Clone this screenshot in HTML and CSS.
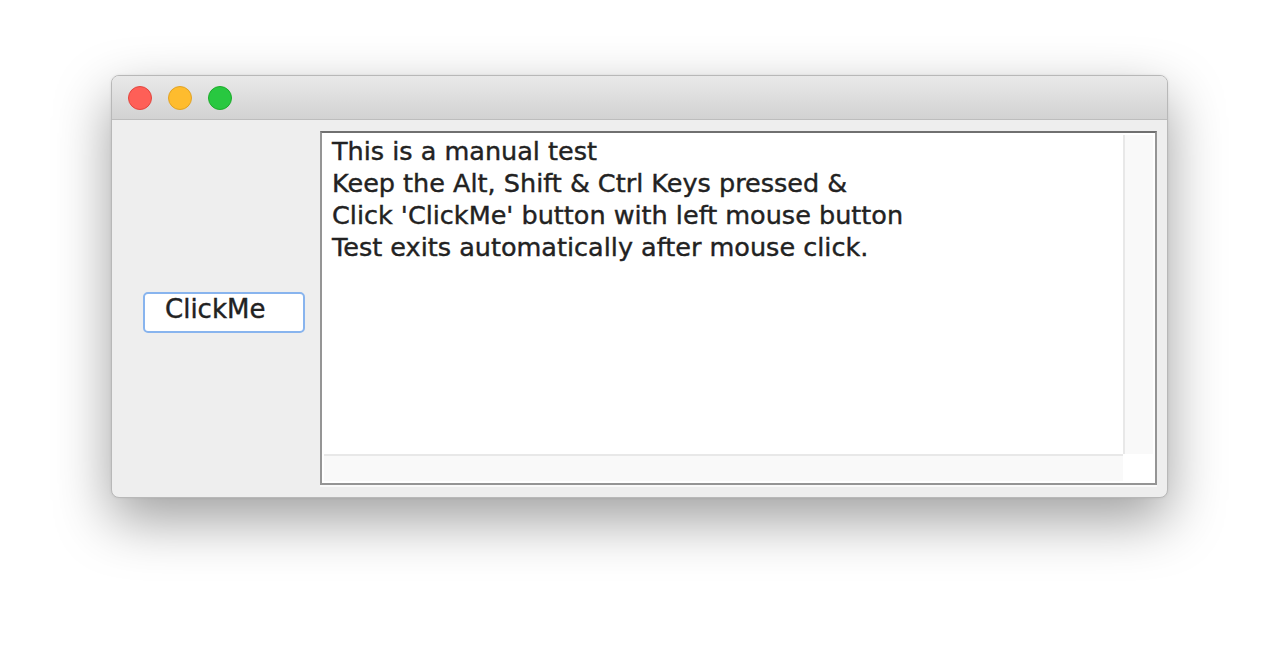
FILE: index.html
```html
<!DOCTYPE html>
<html>
<head>
<meta charset="utf-8">
<link rel="stylesheet" href="styles.css">
</head>
<body>
<div class="window">
  <div class="titlebar">
    <span class="light red"></span>
    <span class="light yellow"></span>
    <span class="light green"></span>
  </div>
  <div class="content">
    <div class="left">
      <button class="btn">ClickMe</button>
    </div>
    <div class="textarea">
      <div class="viewport">
        <div class="text">This is a manual test<br>Keep the Alt, Shift &amp; Ctrl Keys pressed &amp;<br>Click 'ClickMe' button with left mouse button<br>Test exits automatically after mouse click.</div>
        <div class="vscroll"></div>
        <div class="hscroll"></div>
        <div class="corner"></div>
      </div>
    </div>
  </div>
</div>
</body>
</html>
```
FILE: styles.css
```css
html, body {
  margin: 0;
  padding: 0;
  background: #ffffff;
}
body {
  width: 1280px;
  height: 646px;
  overflow: hidden;
  padding-top: 75px;
  box-sizing: border-box;
}
.window {
  margin-left: 111px;
  width: 1057px;
  height: 423px;
  box-sizing: border-box;
  border-radius: 8px;
  border: 1px solid #b8b8b8;
  background: #eeeeee;
  box-shadow: 0 22px 55px rgba(0,0,0,0.38), 0 0 3px rgba(0,0,0,0.08);
  overflow: hidden;
  display: flex;
  flex-direction: column;
}
.titlebar {
  height: 43px;
  flex: none;
  background: linear-gradient(#e9e9e9, #d2d2d2);
  border-bottom: 1px solid #bdbdbd;
  display: flex;
  align-items: center;
  padding-left: 16px;
  gap: 16px;
}
.light {
  width: 24px;
  height: 24px;
  border-radius: 50%;
  box-sizing: border-box;
}
.red { background: #fe5f57; border: 1px solid #e2463f; }
.yellow { background: #febc2e; border: 1px solid #e1a325; }
.green { background: #28c840; border: 1px solid #1dac2b; }
.content {
  flex: 1;
  display: flex;
  padding: 11px 10px 12px 0;
}
.left {
  width: 208px;
  flex: none;
  display: flex;
  align-items: center;
  padding-left: 31px;
  box-sizing: border-box;
}
.btn {
  width: 162px;
  height: 41px;
  margin-top: 8px;
  box-sizing: border-box;
  background: #ffffff;
  border: 2px solid #88b4ee;
  border-radius: 5px;
  font-family: "DejaVu Sans", sans-serif;
  font-size: 26px;
  -webkit-text-stroke: 0.4px #222222;
  color: #222222;
  padding: 0 0 9px 20px;
  line-height: 30px;
  text-align: left;
}
.textarea {
  flex: 1;
  border: 2px solid #959595;
  border-top-color: #707070;
  box-shadow: 0 2px 0 #fafafa;
  background: #ffffff;
  padding: 2px;
}
.viewport {
  height: 100%;
  display: grid;
  grid-template-columns: 1fr 30px;
  grid-template-rows: 1fr 27px;
}
.text {
  font-family: "DejaVu Sans", sans-serif;
  font-size: 25.5px;
  -webkit-text-stroke: 0.4px #222222;
  line-height: 32px;
  color: #222222;
  padding: 0 0 0 8px;
  white-space: nowrap;
}
.vscroll {
  background: #f9f9f9;
  border-left: 2px solid #e8e8e8;
}
.hscroll {
  background: #f9f9f9;
  border-top: 2px solid #e8e8e8;
}
.corner {
  background: #ffffff;
}
```
